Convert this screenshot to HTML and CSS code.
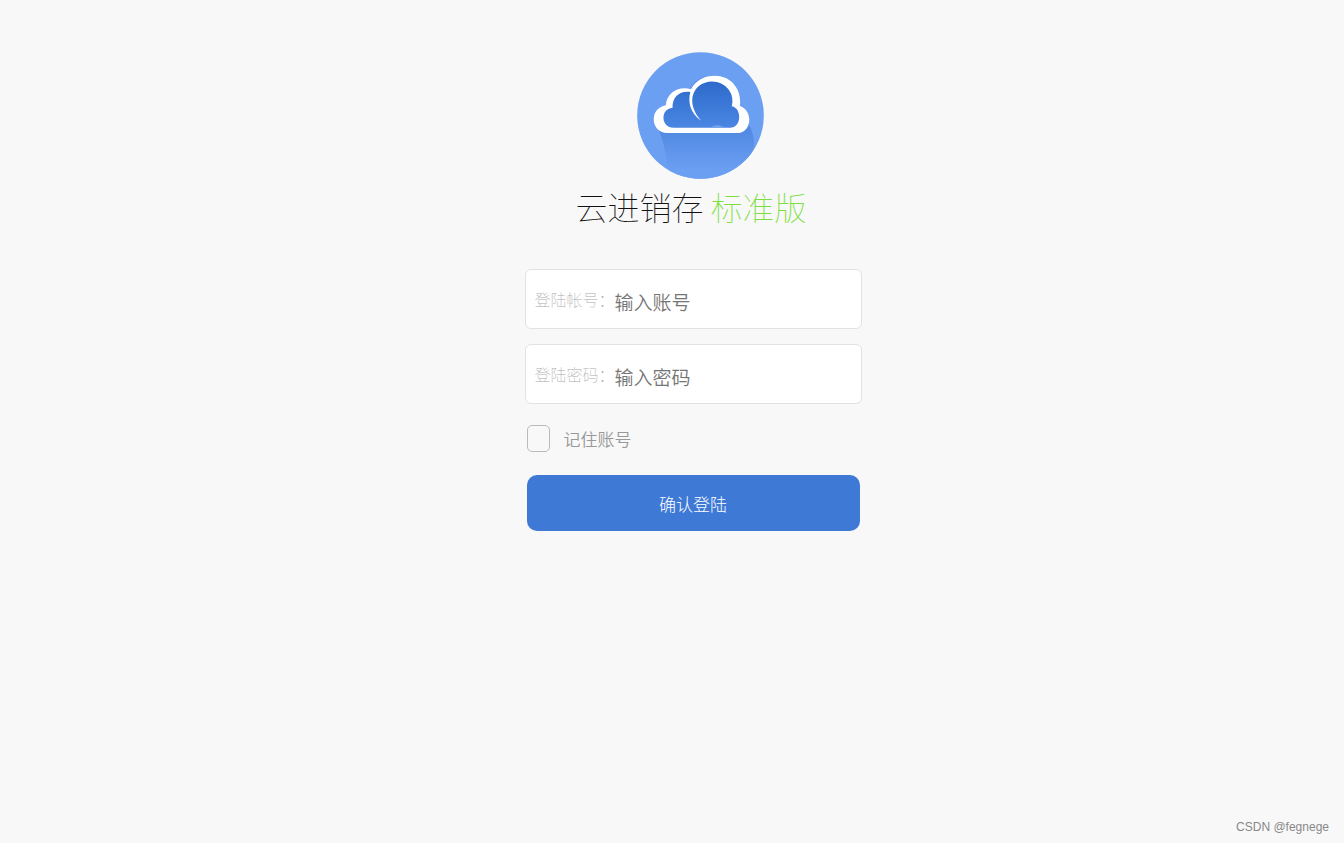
FILE: index.html
```html
<!DOCTYPE html>
<html lang="zh-CN">
<head>
  <meta charset="UTF-8">
  <meta name="viewport" content="width=device-width, initial-scale=1">
  <title>云进销存 标准版</title>
  <link rel="stylesheet" href="styles.css">
</head>
<body>
  <main class="login">
    <svg class="logo" viewBox="36 37 379 379" aria-hidden="true">
      <defs>
        <linearGradient id="cloudFill" x1="0" y1="0" x2="0" y2="1">
          <stop offset="0" stop-color="#2e6acb" />
          <stop offset="1" stop-color="#4a86e2" />
        </linearGradient>
        <linearGradient id="shadowFill" x1="0" y1="0" x2="0" y2="1">
          <stop offset="0" stop-color="#4c85df" />
          <stop offset="0.850" stop-color="#6b9ff2" />
        </linearGradient>
        <clipPath id="disc"><circle cx="225.500" cy="226.500" r="189" /></clipPath>
      </defs>
      <circle cx="225.500" cy="226.500" r="189" fill="#6b9ff2" />
      <!-- long shadow under the cloud -->
      <path clip-path="url(#disc)" fill="url(#shadowFill)" d="M100 266 Q118 310 128 380 L140 416 H350 L386 320 Q386 280 366 246 L330 270 Z" />
      <path d="M196 146 Q208 122 238 110 L210 150 Z" fill="#4c85df" />
      <!-- white outline -->
      <path fill="#fff" d="M127 279 C101 279 86 260 86 238 C86 215 100 201 122 196 C124 161 158 137 197 148 C211 121 239 108 268 108 C313 108 344 142 344 186 L343 198 C362 205 371 221 371 239 C371 262 357 279 333 279 Z" />
      <path fill="url(#cloudFill)" d="M145 263 C126 263 115 249 115 233 C115 215 126 205 142 203 C141 171 163 152 195 156 C187 188 196 220 228 242 C195 207 192 163 220 139 C249 116 291 123 311 151 C321 166 323 182 319 199 C334 202 341 216 341 231 C341 250 330 263 314 263 Z" />
      <path d="M252 263 Q276 248 300 263 Z" fill="#75a4ef" />
    </svg>
    <h1 class="title">云进销存 <span class="edition">标准版</span></h1>

    <form class="form">
      <div class="field">
        <label for="account">登陆帐号：</label>
        <input id="account" type="text" placeholder="输入账号">
      </div>
      <div class="field">
        <label for="password">登陆密码：</label>
        <input id="password" type="password" placeholder="输入密码">
      </div>
      <div class="remember">
        <input id="remember" type="checkbox">
        <label for="remember">记住账号</label>
      </div>
      <button class="submit" type="button">确认登陆</button>
    </form>
  </main>
  <footer class="credit">CSDN @fegnege</footer>
</body>
</html>
```
FILE: styles.css
```css
* {
  box-sizing: border-box;
}

body {
  margin: 0;
  min-height: 100vh;
  display: flex;
  flex-direction: column;
  background-color: #f8f8f8;
  font-family: "Noto Sans CJK SC", sans-serif;
}

.login {
  flex: 1;
  display: flex;
  flex-direction: column;
  align-items: center;
  padding: 52px 0 40px 42px;
}

.logo {
  width: 127px;
  height: 127px;
  margin-left: 14px;
}

.title {
  margin: 3px 4px 39px 0;
  font-size: 32px;
  line-height: 48px;
  font-weight: 100;
  color: #111;
}

.edition {
  color: #7be03c;
}

.form {
  width: 100%;
  max-width: 337px;
  display: flex;
  flex-direction: column;
}

.field {
  display: flex;
  align-items: center;
  height: 60px;
  margin-bottom: 15px;
  padding: 0 9px;
  background-color: #fff;
  border: 1px solid #e2e2e2;
  border-radius: 6px;
}

.field label {
  flex: none;
  font-size: 16px;
  font-weight: 100;
  color: #aaa;
}

.field input {
  flex: 1;
  min-width: 0;
  height: 58px;
  padding: 4px 0 0;
  border: none;
  outline: none;
  background: none;
  font-family: inherit;
  font-size: 19px;
  font-weight: 350;
}

.field input::placeholder {
  color: #757575;
}

.remember {
  display: flex;
  align-items: center;
  gap: 14px;
  margin: 6px 2px 23px;
  color: #999;
  font-size: 17px;
  line-height: 27px;
  font-weight: 350;
}

.remember input {
  appearance: none;
  width: 23px;
  height: 27px;
  margin: 0;
  border: 1px solid #bbb;
  border-radius: 5px;
}

.remember input:checked {
  background-color: #3e79d6;
}

.submit {
  height: 56px;
  margin: 0 2px;
  border: none;
  border-radius: 10px;
  background-color: #3e79d6;
  color: #fff;
  font-family: inherit;
  font-size: 17px;
  font-weight: 300;
  cursor: pointer;
}

.credit {
  padding: 0 15px 8px;
  text-align: right;
  font-family: "Liberation Sans", Arial, sans-serif;
  font-size: 12px;
  line-height: 16px;
  color: #888;
}
```
